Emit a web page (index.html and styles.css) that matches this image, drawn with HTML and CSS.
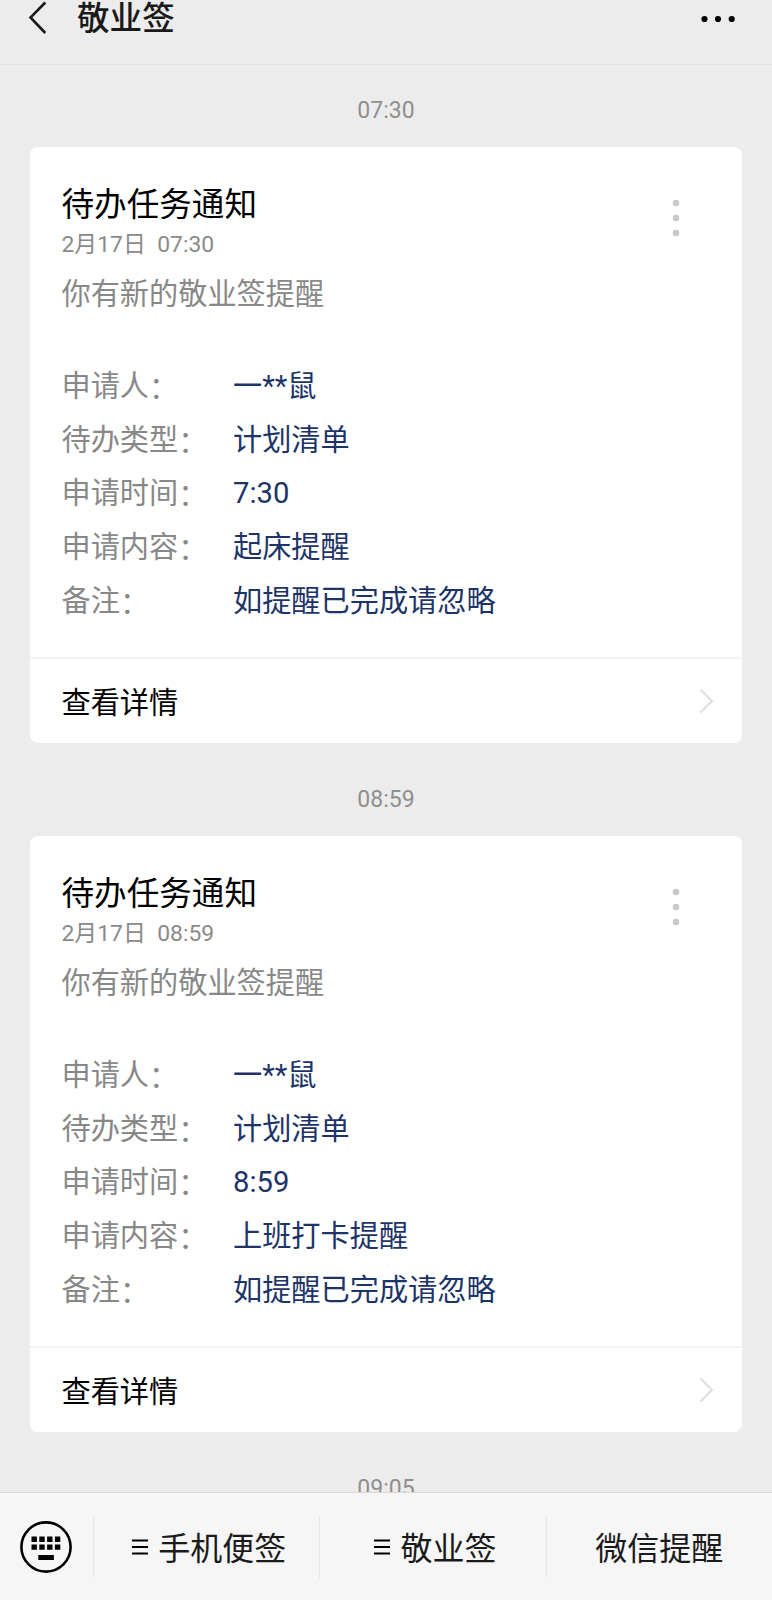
FILE: index.html
```
<!DOCTYPE html>
<html lang="zh-CN">
<head>
    <meta charset="UTF-8">
    <meta name="viewport" content="width=device-width, initial-scale=1.0">
    <title>敬业签</title>
    <link rel="stylesheet" href="styles.css">
</head>
<body>
    <header class="header">
        <svg class="back" width="20" height="34" viewBox="0 0 20 34">
            <path d="M17.3 2.5 L2.5 17.5 L17.3 33" fill="none" stroke="#1a1a1a" stroke-width="2.6"/>
        </svg>
        <h1>敬业签</h1>
        <svg class="more" width="36" height="8" viewBox="0 0 36 8">
            <circle cx="4.5" cy="4" r="3.1"/>
            <circle cx="18" cy="4" r="3.1"/>
            <circle cx="31.7" cy="4" r="3.1"/>
        </svg>
    </header>

    <main class="chat">
        <div class="time">07:30</div>
        <div class="card">
            <div class="card-body">
                <svg class="card-more" width="8" height="38" viewBox="0 0 8 38">
                    <circle cx="4" cy="4" r="3.3"/>
                    <circle cx="4" cy="19" r="3.3"/>
                    <circle cx="4" cy="34" r="3.3"/>
                </svg>
                <h2>待办任务通知</h2>
                <div class="date">2月17日&nbsp; 07:30</div>
                <p class="desc">你有新的敬业签提醒</p>
                <dl>
                    <dt>申请人<i>：</i></dt><dd>一**鼠</dd>
                    <dt>待办类型<i>：</i></dt><dd>计划清单</dd>
                    <dt>申请时间<i>：</i></dt><dd>7:30</dd>
                    <dt>申请内容<i>：</i></dt><dd>起床提醒</dd>
                    <dt>备注<i>：</i></dt><dd>如提醒已完成请忽略</dd>
                </dl>
            </div>
            <div class="card-footer">
                <span>查看详情</span>
                <svg width="15" height="26" viewBox="0 0 15 26">
                    <path d="M1.5 1.5 L13 13 L1.5 24.5" fill="none" stroke="#dedede" stroke-width="2"/>
                </svg>
            </div>
        </div>

        <div class="time">08:59</div>
        <div class="card">
            <div class="card-body">
                <svg class="card-more" width="8" height="38" viewBox="0 0 8 38">
                    <circle cx="4" cy="4" r="3.3"/>
                    <circle cx="4" cy="19" r="3.3"/>
                    <circle cx="4" cy="34" r="3.3"/>
                </svg>
                <h2>待办任务通知</h2>
                <div class="date">2月17日&nbsp; 08:59</div>
                <p class="desc">你有新的敬业签提醒</p>
                <dl>
                    <dt>申请人<i>：</i></dt><dd>一**鼠</dd>
                    <dt>待办类型<i>：</i></dt><dd>计划清单</dd>
                    <dt>申请时间<i>：</i></dt><dd>8:59</dd>
                    <dt>申请内容<i>：</i></dt><dd>上班打卡提醒</dd>
                    <dt>备注<i>：</i></dt><dd>如提醒已完成请忽略</dd>
                </dl>
            </div>
            <div class="card-footer">
                <span>查看详情</span>
                <svg width="15" height="26" viewBox="0 0 15 26">
                    <path d="M1.5 1.5 L13 13 L1.5 24.5" fill="none" stroke="#dedede" stroke-width="2"/>
                </svg>
            </div>
        </div>

        <div class="time">09:05</div>
    </main>

    <nav class="menu">
        <div class="keyboard">
            <svg width="52" height="52" viewBox="0 0 52 52">
                <circle cx="26" cy="26" r="24.6" fill="none" stroke="#000" stroke-width="2.6"/>
                <path d="M11.5 15.5h5.4v5.4h-5.4z M19.3 15.5h5.4v5.4h-5.4z M27.1 15.5h5.4v5.4h-5.4z M34.9 15.5h5.4v5.4h-5.4z M11.5 23.4h5.4v5.4h-5.4z M19.3 23.4h5.4v5.4h-5.4z M27.1 23.4h5.4v5.4h-5.4z M34.9 23.4h5.4v5.4h-5.4z M18.3 34h15.6v5h-15.6z"/>
            </svg>
        </div>
        <div class="menu-item">
            <svg width="16" height="16" viewBox="0 0 16 16"><path d="M0 0.4h16v2.2h-16z M0 6.9h16v2.2h-16z M0 13.4h16v2.2h-16z"/></svg>
            <span>手机便签</span>
        </div>
        <div class="menu-item">
            <svg width="16" height="16" viewBox="0 0 16 16"><path d="M0 0.4h16v2.2h-16z M0 6.9h16v2.2h-16z M0 13.4h16v2.2h-16z"/></svg>
            <span>敬业签</span>
        </div>
        <div class="menu-item">
            <span>微信提醒</span>
        </div>
    </nav>
</body>
</html>
```

FILE: styles.css
```
* { box-sizing: border-box; }
body {
    margin: 0;
    height: 1600px;
    display: flex;
    flex-direction: column;
    overflow: hidden;
    background: #ececec;
    font-family: Roboto, "Noto Sans CJK SC", sans-serif;
}
h1, h2, p, dl, dd { margin: 0; }
svg { display: block; flex: none; }

.header {
    height: 65px;
    flex: none;
    display: flex;
    align-items: flex-start;
    padding: 0 36px 0 28px;
    border-bottom: 1px solid #e4e4e4;
}
.header h1 {
    margin-left: 29px;
    font-size: 32.6px;
    line-height: 38px;
    font-weight: 500;
    color: #1a1a1a;
}
.more { margin: 15px 0 0 auto; }

.chat {
    flex: 1;
    min-height: 0;
    overflow: hidden;
    padding: 0 30px;
}
.time {
    height: 93px;
    padding-top: 27px;
    text-align: center;
    font-size: 23px;
    line-height: 60px;
    color: #8f8f8f;
}
.time:first-child {
    height: 82px;
    padding-top: 16px;
}
.card {
    height: 596px;
    background: #fff;
    border-radius: 8px;
}
.card-body {
    position: relative;
    height: 510px;
    padding: 38px 31.5px 0;
}
.card-more {
    position: absolute;
    top: 52px;
    right: 62px;
    fill: #c8c8c8;
}
.card h2 {
    font-size: 32.6px;
    line-height: 40px;
    font-weight: 400;
    color: #000;
}
.date {
    font-size: 22.9px;
    line-height: 40px;
    color: #8a8a8a;
}
.desc {
    font-size: 29.2px;
    line-height: 58px;
    color: #888;
}
dl {
    display: grid;
    grid-template-columns: 171.5px 1fr;
    grid-auto-rows: 53.7px;
    margin-top: 37px;
    font-size: 29.2px;
    line-height: 53.7px;
    white-space: nowrap;
}
dt { color: #888; }
dt i {
    font-style: normal;
    line-height: 1;
    vertical-align: -2px;
}
dd { color: #1d3468; }
.card-footer {
    height: 86px;
    display: flex;
    align-items: center;
    justify-content: space-between;
    padding: 0 28px 0 31.5px;
    border-top: 2px solid #f3f3f3;
    font-size: 29.2px;
    color: #000;
}
.card-footer span { padding-bottom: 3px; }

.menu {
    height: 108px;
    flex: none;
    display: flex;
    align-items: center;
    background: #f6f6f6;
    border-top: 1px solid #d9d9d9;
}
.keyboard {
    width: 93px;
    padding-left: 20px;
}
.menu-item {
    flex: 1;
    height: 62px;
    display: flex;
    align-items: center;
    justify-content: center;
    gap: 10px;
    border-left: 1px solid #e6e6e6;
    font-size: 32px;
    color: #1a1a1a;
}
.menu-item svg { margin-left: 5px; }
.menu-item span { padding-bottom: 2px; }
```
